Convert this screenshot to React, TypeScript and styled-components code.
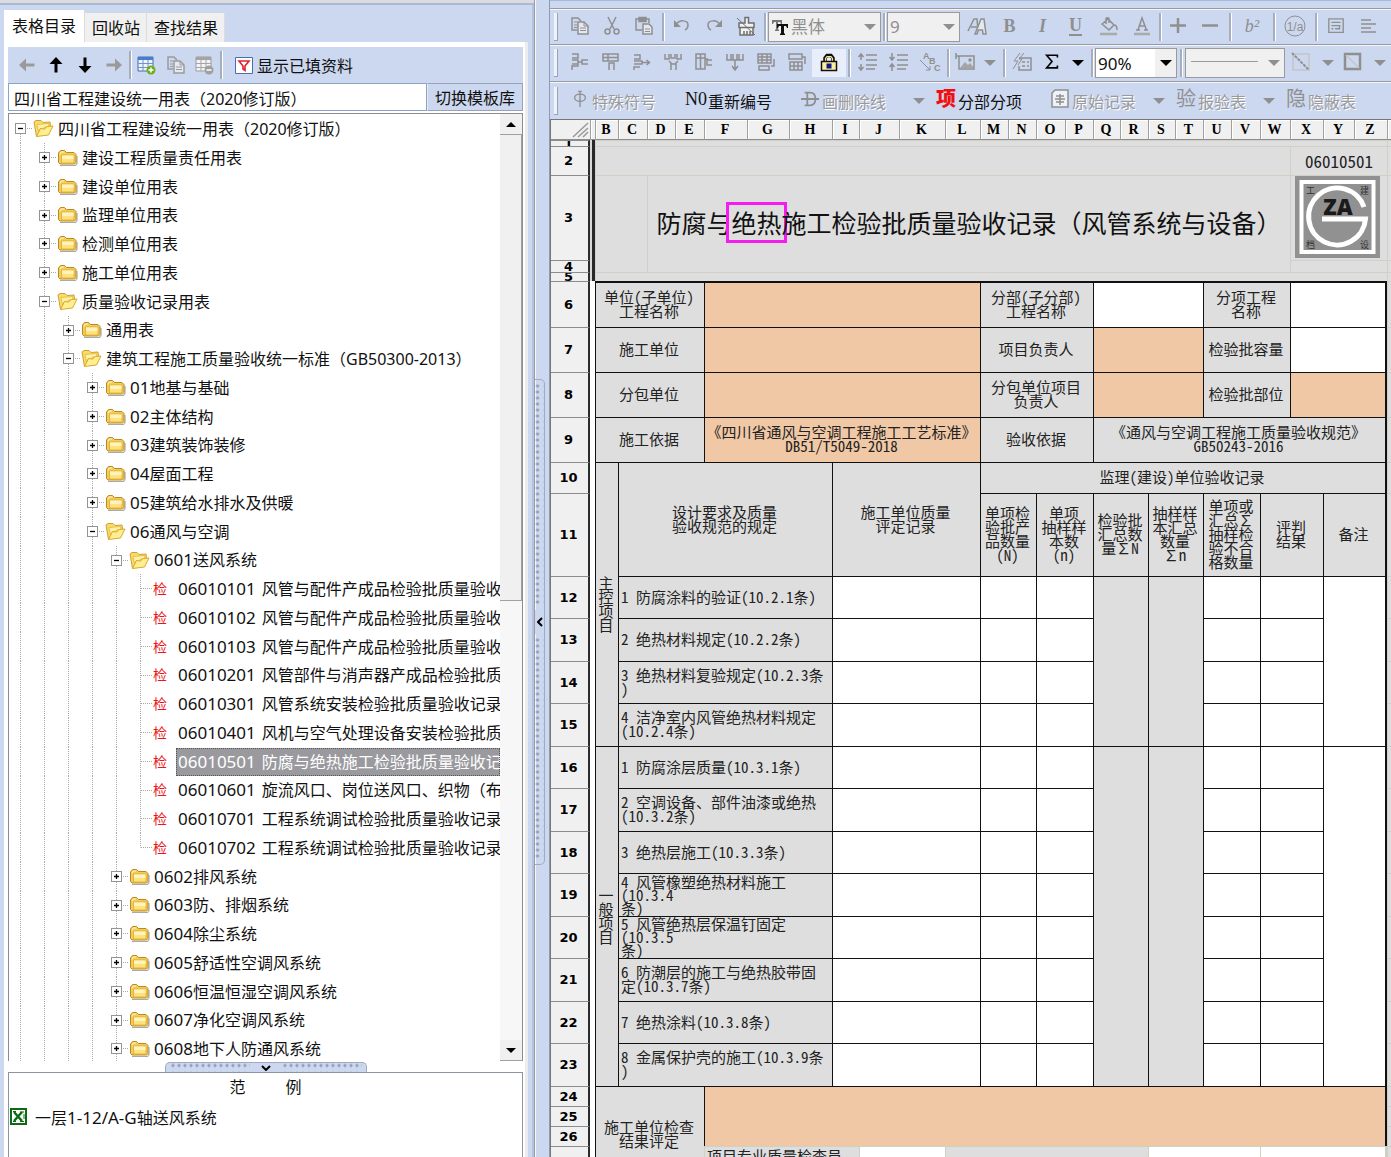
import React from "react";
import styled, { createGlobalStyle, css } from "styled-components";

const UI = `"Noto Sans", "Noto Sans CJK SC", sans-serif`;
const SHEET = `"Noto Sans Mono CJK SC", "Noto Sans CJK SC", monospace`;
const BLUE = "#ccd8f0";
const GREY = "#dedede";
const PEACH = "#f0c8a5";
const LINE = "#9a9a9a";

const Global = createGlobalStyle`
  * { box-sizing: border-box; }
  body { margin: 0; background: ${BLUE}; font-family: ${UI}; font-size: 16px; color: #111; }
  button, input, select { font: inherit; color: inherit; margin: 0; border-radius: 0; }
  button { padding: 0; border: 0; background: none; }
  svg { display: block; flex: none; }
`;

const Page = styled.div`
  display: grid;
  grid-template-columns: 534px 16px minmax(0, 1fr);
  height: 100vh;
  overflow: hidden;
  background: ${BLUE};
`;

/* ---------- left side ---------- */

const Side = styled.aside`
  display: flex;
  flex-direction: column;
  min-height: 0;
  padding: 7px 6px 0 4px;
  border-top: 3px solid #dcdcdc;
  box-shadow: inset 0 2px 0 #a9b9d8, inset -2px 0 0 #b4c2df;
`;

const Tabs = styled.div`
  display: flex;
  align-items: flex-end;
  height: 32px;
  flex: none;
`;

const Tab = styled.button<{ $active?: boolean }>`
  height: ${(p) => (p.$active ? 32 : 29)}px;
  padding: 0 ${(p) => (p.$active ? 8 : 6)}px;
  line-height: 28px;
  background: ${(p) => (p.$active ? "#fff" : "#f0f0f0")};
  border-right: 1px solid #dcdcdc;
  & + & { padding-left: 7px; }
`;

const SideBody = styled.div`
  display: flex;
  flex-direction: column;
  flex: 1;
  min-height: 0;
  padding: 5px 2px 0 4px;
  background: #fff;
  border-right: 3px solid #ececec;
`;

const SideTools = styled.div`
  display: flex;
  align-items: center;
  height: 36px;
  flex: none;
  padding-left: 4px;
  background: ${BLUE};
`;

const SideTool = styled.button`
  width: 29px;
  height: 30px;
  display: flex;
  align-items: center;
  justify-content: center;
  color: #9a9a9a;
`;

const FilterTool = styled.button`
  display: flex;
  align-items: center;
  gap: 4px;
  padding-left: 12px;
`;

const Divider = styled.i<{ $w?: number }>`
  flex: none;
  display: flex;
  justify-content: center;
  width: ${(p) => p.$w ?? 6}px;
  height: 28px;
  &::before {
    content: "";
    width: 2px;
    background: #a6aebd;
    border-right: 1px solid #fff;
  }
`;

const LibraryRow = styled.div`
  display: flex;
  height: 28px;
  flex: none;
  margin-bottom: 2px;
`;

const LibraryInput = styled.input`
  flex: 1;
  min-width: 0;
  padding: 2px 5px 0;
  border: 1px solid #8ba3c7;
  background: #fff;
  outline: 0;
`;

const LibraryButton = styled.button`
  width: 96px;
  background: ${BLUE};
  border: 1px solid #9aa3b5;
  border-left-color: #e4ebf8;
`;

const TreeFrame = styled.div`
  display: flex;
  flex: 1;
  min-height: 0;
  border: 1px solid #8d8d8d;
  border-width: 1px 1px 0 1px;
  background: #fff;
`;

const Tree = styled.ul`
  flex: 1;
  min-width: 0;
  margin: 0;
  padding: 0;
  list-style: none;
  overflow: hidden;
`;

const TreeRow = styled.li`
  display: flex;
  align-items: center;
  height: 29px;
  white-space: nowrap;
  &:nth-child(4n) { height: 28px; }
`;

const Guide = styled.span<{ $part: "all" | "top" | "bottom" }>`
  position: relative;
  flex: none;
  align-self: stretch;
  display: flex;
  align-items: center;
  justify-content: center;
  width: 24px;
  background: repeating-linear-gradient(#a8a8a8 0 1px, transparent 1px 2px) 11px
    ${(p) => (p.$part === "bottom" ? "14px" : "0")} / 1px
    ${(p) => (p.$part === "top" ? "50%" : "100%")} no-repeat;
`;

const Branch = styled.span`
  position: absolute;
  left: 12px;
  right: 0;
  top: 14px;
  height: 1px;
  background: repeating-linear-gradient(90deg, #a8a8a8 0 1px, transparent 1px 2px);
`;

const Toggle = styled.button`
  position: relative;
  width: 11px;
  height: 11px;
  margin-right: 1px;
  background: #fff;
  border: 1px solid #949494;
`;

const NodeIcon = styled.span<{ $leaf?: boolean }>`
  flex: none;
  display: flex;
  justify-content: ${(p) => (p.$leaf ? "flex-start" : "center")};
  width: 21px;
  margin-right: 2px;
`;

const CheckMark = styled.span`
  color: #f01414;
  font-size: 14px;
  line-height: 20px;
`;

const NodeLabel = styled.span<{ $selected?: boolean }>`
  display: flex;
  flex: 1;
  min-width: 0;
  overflow: hidden;
  padding-left: 2px;
  height: 28px;
  line-height: 28px;
  ${(p) =>
    p.$selected &&
    css`
      color: #fff;
      background: #9a9a9e;
      outline: 1px dotted #55555a;
      outline-offset: -1px;
    `}
`;

const Code = styled.span<{ $gap?: boolean }>`
  font-size: 17px;
  margin-right: ${(p) => (p.$gap ? 6 : 0)}px;
`;

const ScrollBar = styled.div`
  display: flex;
  flex-direction: column;
  width: 22px;
  background: #f7f7f7;
`;

const ScrollButton = styled.button`
  display: flex;
  align-items: center;
  justify-content: center;
  height: 21px;
  background: #f0f0f0;
  border-bottom: 1px solid #a0a0a0;
`;

const Thumb = styled.div`
  flex: 0 1 466px;
  background: #f0f0f0;
  border-right: 1px solid #a0a0a0;
  border-bottom: 1px solid #a0a0a0;
`;

const Gap = styled.div`
  flex: 1;
`;

const dots = css`
  background-image: radial-gradient(circle at 2px 2px, #8f9cb5 1px, transparent 2px);
  background-position: center;
`;

const PaneHandle = styled.div`
  align-self: center;
  display: flex;
  flex: none;
  width: 202px;
  height: 10px;
  margin: 1px 0 0 0;
  border: 1px solid #a3aabb;
  border-bottom: 0;
  border-radius: 5px 5px 0 0;
  background: ${BLUE};
`;

const HandleDotsX = styled.span`
  flex: 1;
  margin: 0 4px;
  ${dots}
  background-size: 6px 8px;
`;

const HandleButton = styled.button`
  display: flex;
  align-items: center;
  justify-content: center;
  flex: 0 0 24px;
  background: ${BLUE};
  border: 0 solid #a3aabb;
`;

const Samples = styled.section`
  flex: 0 0 85px;
  border: 1px solid #8c94a3;
  border-bottom: 0;
  background: #fff;
`;

const SamplesTitle = styled.h2`
  display: flex;
  justify-content: center;
  gap: 40px;
  margin: 0;
  font-size: 16px;
  font-weight: 400;
  line-height: 29px;
`;

const SampleItem = styled.button`
  display: flex;
  align-items: center;
  gap: 8px;
  height: 29px;
  padding-left: 1px;
`;

/* ---------- splitter ---------- */

const Splitter = styled.div`
  display: flex;
  flex-direction: column;
  justify-content: center;
  padding-top: 87px;
  border-left: 1px solid #9c9c9c;
  border-right: 1px solid #8f9bb0;
  box-shadow: inset 1px 0 0 #f4f6fb;
`;

const SplitHandle = styled.div`
  display: flex;
  flex-direction: column;
  width: 10px;
  height: 486px;
  border: 1px solid #a3aabb;
  border-left: 0;
  border-radius: 0 5px 5px 0;
`;

const HandleDotsY = styled.span`
  flex: 1;
  margin: 4px 0;
  ${dots}
  background-size: 8px 6px;
`;

/* ---------- right side ---------- */

const Main = styled.main`
  display: flex;
  flex-direction: column;
  min-width: 0;
  overflow: hidden;
  padding-top: 7px;
  border-top: 1px solid #a9b9d8;
`;

const Toolbar = styled.div<{ $h: number }>`
  display: flex;
  align-items: center;
  flex: none;
  height: ${(p) => p.$h}px;
  border-top: 1px solid ${LINE};
  box-shadow: inset 0 1px 0 #f3f6fc;
  overflow: hidden;
  white-space: nowrap;
`;

const Grip = styled.i`
  flex: none;
  width: 4px;
  height: 28px;
  margin: 0 6px 0 4px;
  background: #eef2fa;
  border-right: 1px solid #9aa3b5;
  border-bottom: 1px solid #9aa3b5;
`;

const Tool = styled.button<{ $w?: number; $on?: boolean; $live?: boolean }>`
  flex: none;
  display: flex;
  align-items: center;
  justify-content: center;
  width: ${(p) => p.$w ?? 32}px;
  height: 28px;
  padding-bottom: 2px;
  color: ${(p) => (p.$live ? "#000" : "#8f8f8f")};
  background: ${(p) => (p.$on ? "#e8eefa" : "none")};
`;

const Glyph = styled.span<{ $italic?: boolean; $under?: boolean; $plain?: boolean }>`
  font-family: "Liberation Serif", serif;
  font-size: 18px;
  font-weight: ${(p) => (p.$plain ? 400 : 700)};
  line-height: 18px;
  font-style: ${(p) => (p.$italic ? "italic" : "normal")};
  border-bottom: ${(p) => (p.$under ? "2px solid currentColor" : "0")};
`;

const PickBox = styled.span<{ $w: number }>`
  position: relative;
  flex: none;
  display: flex;
  width: ${(p) => p.$w}px;
  height: 30px;
`;

const Pick = styled.select<{ $left?: number; $live?: boolean }>`
  appearance: none;
  width: 100%;
  padding: 0 24px 0 ${(p) => p.$left ?? 2}px;
  border: 1px solid ${LINE};
  background: ${(p) => (p.$live ? "linear-gradient(90deg, #fff calc(100% - 21px), #f0f0f0 0)" : "#f0f0f0")};
  color: ${(p) => (p.$live ? "#111" : "#8f8f8f")};
  font-family: ${UI};
  font-size: 17px;
  opacity: 1;
  outline: 0;
`;

const PickArrow = styled.span`
  position: absolute;
  right: 5px;
  top: 12px;
  pointer-events: none;
`;

const PickArt = styled.span`
  position: absolute;
  left: 4px;
  top: 6px;
  pointer-events: none;
`;

const TextTool = styled.button<{ $ml?: number; $off?: boolean }>`
  flex: none;
  display: flex;
  align-items: center;
  gap: 2px;
  height: 28px;
  padding: 0 6px;
  margin-left: ${(p) => p.$ml ?? 0}px;
  color: ${(p) => (p.$off ? "#9a9a9a" : "#111")};
  text-shadow: ${(p) => (p.$off ? "1px 1px 0 #fff" : "none")};
`;

const TextToolIcon = styled.span<{ $color?: string; $bold?: boolean; $serif?: boolean }>`
  display: flex;
  justify-content: center;
  width: 20px;
  padding-bottom: 3px;
  color: ${(p) => p.$color ?? "#8f8f8f"};
  font-family: ${(p) => (p.$serif ? `"Liberation Serif", serif` : UI)};
  font-size: ${(p) => (p.$serif ? 18 : 20)}px;
  font-weight: ${(p) => (p.$bold ? 900 : 400)};
  line-height: 24px;
  text-shadow: none;
`;

const MenuArrow = styled.button<{ $ml?: number }>`
  flex: none;
  display: flex;
  justify-content: center;
  width: 22px;
  margin-left: ${(p) => p.$ml ?? 0}px;
`;

const SheetPane = styled.div`
  flex: 1;
  min-height: 0;
  overflow: hidden;
  background: ${GREY};
  border-left: 1px solid #777;
  border-top: 1px solid #777;
`;

const Sheet = styled.table`
  width: 100%;
  table-layout: fixed;
  border-collapse: separate;
  border-spacing: 0;
  font-family: ${SHEET};
  font-size: 15px;
  line-height: 14px;
  color: #222;
`;

const ColHead = styled.th`
  height: 20px;
  padding: 0 2px 0 0;
  background: #f0f0f0;
  border-left: 1px solid #a0a0a0;
  border-bottom: 1px solid #8c8c8c;
  box-shadow: inset 1px 1px 0 #fff;
  font: bold 14px/18px "Liberation Serif", serif;
  color: #000;
`;

const Corner = styled.th`
  padding: 0;
  background: #f0f0f0;
  border-bottom: 1px solid #8c8c8c;
  & > svg { margin-left: auto; }
`;

const RowHead = styled.th`
  padding: 0 2px 0 0;
  background: #f0f0f0;
  border-top: 1px solid #8c8c8c;
  border-right: 2px solid #2a2c2f;
  font: bold 13px/12px "DejaVu Sans", sans-serif;
  color: #000;
`;

const RowNumber = styled.div<{ $h: number }>`
  display: flex;
  align-items: center;
  justify-content: center;
  height: ${(p) => p.$h - 1}px;
  overflow: hidden;
`;

const Margin = styled.td<{ $dark?: boolean }>`
  padding: 0;
  background: ${(p) => (p.$dark ? "#d8d8d8" : "#fff")};
  border-right: ${(p) => (p.$dark ? "3px solid #26282b" : "0")};
`;

type Tone = "grey" | "peach" | "white";
const tones: Record<Tone, string> = { grey: GREY, peach: PEACH, white: "#fff" };

const Cell = styled.td<{
  $tone: Tone;
  $faint?: boolean;
  $left?: boolean;
  $end?: boolean;
  $thickTop?: boolean;
  $dense?: boolean;
  $top?: boolean;
}>`
  padding: ${(p) => (p.$top ? "2px 2px 0" : p.$left ? "0 0 2px 2px" : p.$faint ? "0" : "0 2px 2px 0")};
  vertical-align: ${(p) => (p.$top ? "top" : "middle")};
  text-align: ${(p) => (p.$left ? "left" : "center")};
  white-space: pre;
  overflow: hidden;
  background: ${(p) => tones[p.$tone]};
  border: 0 solid ${(p) => (p.$faint ? "#d2cfc6" : "#111")};
  border-top-width: ${(p) => (p.$thickTop ? 2 : 1)}px;
  border-left-width: 1px;
  border-right-width: ${(p) => (p.$end ? 2 : 0)}px;
  line-height: ${(p) => (p.$dense ? 13 : 14)}px;
`;

const Title = styled.div`
  padding-bottom: 4px;
  font-size: 25px;
  line-height: 32px;
  color: #111;
`;

const Highlight = styled.mark`
  display: inline-block;
  line-height: 31px;
  color: inherit;
  background: none;
  outline: 3px solid #f31df0;
  outline-offset: 2px;
`;

const FormCode = styled.div`
  font-size: 17px;
  line-height: 20px;
`;

const LogoBox = styled.div`
  padding-left: 2px;
`;

/* ---------- drawings ---------- */

const Tri = ({ up, color = "#8f8f8f", w = 12 }: { up?: boolean; color?: string; w?: number }) => (
  <svg width={w} height={w / 2} viewBox="0 0 12 6">
    <path d={up ? "M0 6 6 0l6 6z" : "M0 0h12L6 6z"} fill={color} />
  </svg>
);

const Art = ({ children, s = 20 }: { children: React.ReactNode; s?: number }) => (
  <svg width={s} height={s} viewBox="0 0 20 20" fill="none" stroke="currentColor" strokeWidth="1.5">
    {children}
  </svg>
);

const ClosedFolder = () => (
  <svg width="21" height="18" viewBox="0 0 21 18">
    <path d="M3 16.5h15.500l1.500-2V7" fill="none" stroke="#a9a9a9" strokeWidth="1.200" />
    <path d="M1.500 13.500V4l2-2.500h4L9.500 3.500h7.500l2 2v8l-1.500 1.500H3z" fill="#f3cb58" stroke="#b98a1c" />
    <path d="M4.500 6h12.500v8H4.500z" fill="#ffe27a" stroke="#d9aa3a" strokeWidth=".8" />
    <path d="M5 6.500h11.500v3.500H5z" fill="#fff4bd" />
    <path d="M3 5.500 4 3h3" fill="none" stroke="#fff4bd" />
  </svg>
);

const OpenFolder = () => (
  <svg width="21" height="19" viewBox="0 0 21 19">
    <path d="M3.500 17.500 1 3l2-1.500h5L10 3.500l7-.5.500 4" fill="#f8dc6a" stroke="#d0a02c" />
    <path d="M5.500 13 4 5.500l11.500-1 .5 3-4.500.5-1.500 1.500-3 .5z" fill="#fff2a6" stroke="#e2b840" strokeWidth=".8" />
    <path d="M3.500 17.500 7.500 9.500l4 .5 3-2.500 5.500-.5-4.500 9z" fill="#ffee92" stroke="#d9a92c" />
  </svg>
);

const Arrow = ({ r, color }: { r: number; color: string }) => (
  <svg width="16" height="16" viewBox="0 0 16 16">
    <path transform={`rotate(${r} 8 8)`} d="M0 8 7 1.500v5h8.500v3H7v5z" fill={color} />
  </svg>
);

const Grid = ({ off, minus }: { off?: boolean; minus?: boolean }) => (
  <svg width="19" height="19" viewBox="0 0 19 19">
    <path d="M1 1h15v14H1z" fill="#f2f4f8" stroke={off ? "#9b9b9b" : "#3f6db5"} />
    <path d="M1 1h15v3H1z" fill={off ? "#a5a5a5" : "#4a7cc8"} />
    <path d="M1 7.500h15M1 11.500h15M6 4v11M11 4v11" stroke={off ? "#a5a5a5" : "#6a94d2"} />
    <circle cx="14" cy="14" r="4.500" fill={off ? "#a0a0a0" : "#6cae1e"} />
    <path d={minus ? "M11.500 14h5" : "M11.500 14h5M14 11.500v5"} stroke="#fff" strokeWidth="1.500" />
  </svg>
);

const CopyArt = () => (
  <Art>
    <path d="M7 14H2V2h6l3 3" />
    <path d="M4 6h3M4 9h3M4 11.500h3" strokeWidth="1" />
    <path d="M8 6h6l4 4v8H8z" fill="#e4e8f0" />
    <path d="M14 6v4h4M10 12h6M10 14.500h6" strokeWidth="1" />
  </Art>
);

const Funnel = () => (
  <svg width="18" height="17" viewBox="0 0 18 17">
    <path d="M.500.500h17v16H.500z" fill="#fff" stroke="#4a6fb0" />
    <path d="M4 4h10l-4 5v4.500L8 12V9z" fill="none" stroke="#e0202c" strokeWidth="1.600" />
  </svg>
);

const ExcelArt = () => (
  <svg width="17" height="17" viewBox="0 0 17 17">
    <path d="M1 1h15v15H1z" fill="#fff" stroke="#0b6a12" strokeWidth="2" />
    <path d="m4 4 8 9M12 4l-8 9" stroke="#0b6a12" strokeWidth="2.400" />
    <path d="M10 4h4M10 13.500h4M3 13.500h3M3 3.500h3M14 6v5" stroke="#0b6a12" />
  </svg>
);

const LockArt = () => (
  <svg width="18" height="19" viewBox="0 0 18 19">
    <path d="M5 9V5l2-2.500h4L13 5v4" fill="none" stroke="#111" strokeWidth="3.500" />
    <path d="M5.500 9V5.500L7 3.500h4l1.500 2V9" fill="none" stroke="#f5e98c" strokeWidth="1.200" />
    <path d="M1.500 8.500h15v9h-15z" fill="#fbf0a0" stroke="#111" strokeWidth="1.500" />
    <path d="M6.500 10.500h5v5h-5z" fill="#14148c" />
  </svg>
);

const Logo = () => (
  <svg width="85" height="82" viewBox="0 0 85 82">
    <path d="M0 0h85v82H0z" fill="#919191" />
    <path d="M6.500 6h72v70h-72z" fill="none" stroke="#fff" strokeWidth="4" />
    <path d="M69 31A28.500 28.500 0 1 0 70.500 43H27" fill="none" stroke="#fff" strokeWidth="5" />
    <text x="43" y="39" textAnchor="middle" fontFamily="Open Sans, sans-serif" fontWeight="800" fontSize="22" fill="#1a1a1a">ZA</text>
    <g fontFamily="Noto Sans CJK SC, sans-serif" fontSize="9" fill="#333">
      <text x="11" y="18">工</text>
      <text x="65" y="18">建</text>
      <text x="11" y="72">档</text>
      <text x="65" y="72">设</text>
    </g>
  </svg>
);

/* ---------- tree data ---------- */

type Node = { d: number; kind: "open" | "closed" | "leaf"; code?: string; t: string; sel?: boolean; last?: boolean };
const nodes: Node[] = [
  { d: 0, kind: "open", t: "四川省工程建设统一用表（2020修订版）" },
  { d: 1, kind: "closed", t: "建设工程质量责任用表" },
  { d: 1, kind: "closed", t: "建设单位用表" },
  { d: 1, kind: "closed", t: "监理单位用表" },
  { d: 1, kind: "closed", t: "检测单位用表" },
  { d: 1, kind: "closed", t: "施工单位用表" },
  { d: 1, kind: "open", t: "质量验收记录用表" },
  { d: 2, kind: "closed", t: "通用表" },
  { d: 2, kind: "open", t: "建筑工程施工质量验收统一标准（GB50300-2013）" },
  { d: 3, kind: "closed", code: "01", t: "地基与基础" },
  { d: 3, kind: "closed", code: "02", t: "主体结构" },
  { d: 3, kind: "closed", code: "03", t: "建筑装饰装修" },
  { d: 3, kind: "closed", code: "04", t: "屋面工程" },
  { d: 3, kind: "closed", code: "05", t: "建筑给水排水及供暖" },
  { d: 3, kind: "open", code: "06", t: "通风与空调" },
  { d: 4, kind: "open", code: "0601", t: "送风系统" },
  { d: 5, kind: "leaf", code: "06010101", t: "风管与配件产成品检验批质量验收记录" },
  { d: 5, kind: "leaf", code: "06010102", t: "风管与配件产成品检验批质量验收记录" },
  { d: 5, kind: "leaf", code: "06010103", t: "风管与配件产成品检验批质量验收记录" },
  { d: 5, kind: "leaf", code: "06010201", t: "风管部件与消声器产成品检验批质量验收记录" },
  { d: 5, kind: "leaf", code: "06010301", t: "风管系统安装检验批质量验收记录" },
  { d: 5, kind: "leaf", code: "06010401", t: "风机与空气处理设备安装检验批质量验收记录" },
  { d: 5, kind: "leaf", code: "06010501", t: "防腐与绝热施工检验批质量验收记录", sel: true },
  { d: 5, kind: "leaf", code: "06010601", t: "旋流风口、岗位送风口、织物（布）风管安装" },
  { d: 5, kind: "leaf", code: "06010701", t: "工程系统调试检验批质量验收记录" },
  { d: 5, kind: "leaf", code: "06010702", t: "工程系统调试检验批质量验收记录", last: true },
  { d: 4, kind: "closed", code: "0602", t: "排风系统" },
  { d: 4, kind: "closed", code: "0603", t: "防、排烟系统" },
  { d: 4, kind: "closed", code: "0604", t: "除尘系统" },
  { d: 4, kind: "closed", code: "0605", t: "舒适性空调风系统" },
  { d: 4, kind: "closed", code: "0606", t: "恒温恒湿空调风系统" },
  { d: 4, kind: "closed", code: "0607", t: "净化空调风系统" },
  { d: 4, kind: "closed", code: "0608", t: "地下人防通风系统" },
];

const TreeNode = ({ n }: { n: Node }) => (
  <TreeRow role="treeitem" aria-level={n.d + 1} aria-selected={!!n.sel}>
    {Array.from({ length: n.d }, (_, i) => (
      <Guide key={i} $part="all" />
    ))}
    <Guide $part={n.d === 0 ? "bottom" : n.last ? "top" : "all"}>
      <Branch />
      {n.kind !== "leaf" && (
        <Toggle aria-label={n.kind === "open" ? "折叠" : "展开"}>
          <svg width="9" height="9" viewBox="0 0 9 9">
            <path d={n.kind === "open" ? "M2 4.500h5" : "M2 4.500h5M4.500 2v5"} stroke="#000" strokeWidth="1.300" />
          </svg>
        </Toggle>
      )}
    </Guide>
    <NodeIcon $leaf={n.kind === "leaf"}>
      {n.kind === "leaf" ? <CheckMark>检</CheckMark> : n.kind === "open" ? <OpenFolder /> : <ClosedFolder />}
    </NodeIcon>
    <NodeLabel $selected={n.sel}>
      {n.code && <Code $gap={n.kind === "leaf"}>{n.code}</Code>}
      {n.t}
    </NodeLabel>
  </TreeRow>
);

/* ---------- sheet data ---------- */

type C = {
  c?: number;
  r?: number;
  tone?: Tone;
  t?: React.ReactNode;
  left?: boolean;
  end?: boolean;
  faint?: boolean;
  thick?: boolean;
  dense?: boolean;
  top?: boolean;
};
type R = { n: string; h: number; cells: C[] };

const columns: [string, number][] = [
  ["B", 23], ["C", 29], ["D", 28], ["E", 29], ["F", 43], ["G", 42], ["H", 43], ["I", 27], ["J", 40],
  ["K", 46], ["L", 35], ["M", 28], ["N", 28], ["O", 29], ["P", 28], ["Q", 27], ["R", 28], ["S", 27],
  ["T", 28], ["U", 28], ["V", 29], ["W", 30], ["X", 33], ["Y", 31], ["Z", 33],
];

const item = (n: string, h: number, t: string, first?: { label: string; rows: number }, dense?: boolean): R => ({
  n,
  h,
  cells: [
    ...(first ? [{ r: first.rows, t: first.label } as C] : []),
    { c: 6, t, left: true, dense },
    { c: 4, tone: "white" },
    { c: 2, tone: "white" },
    { c: 2, tone: "white" },
    ...(n === "12" || n === "16" ? [{ c: 2, r: n === "12" ? 4 : 8 }, { c: 2, r: n === "12" ? 4 : 8 }] : []),
    { c: 2, tone: "white" },
    { c: 2, tone: "white" },
    ...(n === "12" || n === "16" ? [{ c: 2, r: n === "12" ? 4 : 8, tone: "white", end: true } as C] : []),
  ],
});

const rows: R[] = [
  { n: "1", h: 6, cells: [{ c: 25, faint: true }] },
  { n: "2", h: 29, cells: [{ c: 22, faint: true }, { c: 3, faint: true, t: <FormCode>06010501</FormCode> }] },
  {
    n: "3",
    h: 85,
    cells: [
      { c: 2, r: 2, faint: true },
      {
        c: 20,
        r: 2,
        faint: true,
        t: (
          <Title>
            防腐与<Highlight>绝热</Highlight>施工检验批质量验收记录（风管系统与设备）
          </Title>
        ),
      },
      { c: 3, faint: true, left: true, t: <LogoBox><Logo /></LogoBox> },
    ],
  },
  { n: "4", h: 12, cells: [{ c: 3, faint: true }] },
  { n: "5", h: 9, cells: [{ c: 25, faint: true }] },
  {
    n: "6",
    h: 46,
    cells: [
      { c: 4, thick: true, t: "单位(子单位)\n工程名称" },
      { c: 7, thick: true, tone: "peach" },
      { c: 4, thick: true, t: "分部(子分部)\n工程名称" },
      { c: 4, thick: true, tone: "white" },
      { c: 3, thick: true, t: "分项工程\n名称" },
      { c: 3, thick: true, tone: "white", end: true },
    ],
  },
  {
    n: "7",
    h: 45,
    cells: [
      { c: 4, t: "施工单位" },
      { c: 7, tone: "peach" },
      { c: 4, t: "项目负责人" },
      { c: 4, tone: "peach" },
      { c: 3, t: "检验批容量" },
      { c: 3, tone: "white", end: true },
    ],
  },
  {
    n: "8",
    h: 45,
    cells: [
      { c: 4, t: "分包单位" },
      { c: 7, tone: "peach" },
      { c: 4, t: "分包单位项目\n负责人" },
      { c: 4, tone: "peach" },
      { c: 3, t: "检验批部位" },
      { c: 3, tone: "peach", end: true },
    ],
  },
  {
    n: "9",
    h: 45,
    cells: [
      { c: 4, t: "施工依据" },
      { c: 7, tone: "peach", t: "《四川省通风与空调工程施工工艺标准》\nDB51/T5049-2018" },
      { c: 4, t: "验收依据" },
      { c: 10, end: true, t: "《通风与空调工程施工质量验收规范》\nGB50243-2016" },
    ],
  },
  {
    n: "10",
    h: 31,
    cells: [
      { r: 6, t: "主\n控\n项\n目" },
      { c: 6, r: 2, t: "设计要求及质量\n验收规范的规定" },
      { c: 4, r: 2, t: "施工单位质量\n评定记录" },
      { c: 14, end: true, t: "监理(建设)单位验收记录" },
    ],
  },
  {
    n: "11",
    h: 83,
    cells: [
      { c: 2, t: "单项检\n验批产\n品数量\n(N)" },
      { c: 2, t: "单项\n抽样样\n本数\n(n)" },
      { c: 2, t: "检验批\n汇总数\n量∑N" },
      { c: 2, t: "抽样样\n本汇总\n数量\n∑n" },
      { c: 2, t: "单项或\n汇总∑\n抽样检\n验不合\n格数量" },
      { c: 2, t: "评判\n结果" },
      { c: 2, end: true, t: "备注" },
    ],
  },
  item("12", 42, "1 防腐涂料的验证(10.2.1条)"),
  item("13", 43, "2 绝热材料规定(10.2.2条)"),
  item("14", 42, "3 绝热材料复验规定(10.2.3条\n)"),
  item("15", 43, "4 洁净室内风管绝热材料规定\n(10.2.4条)"),
  item("16", 42, "1 防腐涂层质量(10.3.1条)", { label: "一\n般\n项\n目", rows: 8 }),
  item("17", 43, "2 空调设备、部件油漆或绝热\n(10.3.2条)"),
  item("18", 42, "3 绝热层施工(10.3.3条)"),
  item("19", 43, "4 风管橡塑绝热材料施工\n(10.3.4\n条)", undefined, true),
  item("20", 42, "5 风管绝热层保温钉固定\n(10.3.5\n条)", undefined, true),
  item("21", 43, "6 防潮层的施工与绝热胶带固\n定(10.3.7条)"),
  item("22", 42, "7 绝热涂料(10.3.8条)"),
  item("23", 43, "8 金属保护壳的施工(10.3.9条\n)"),
  {
    n: "24",
    h: 20,
    cells: [
      { c: 4, r: 4, t: "施工单位检查\n结果评定" },
      { c: 21, r: 3, tone: "peach", end: true },
    ],
  },
  { n: "25", h: 20, cells: [] },
  { n: "26", h: 20, cells: [] },
  {
    n: "27",
    h: 36,
    cells: [
      { c: 4, faint: true, left: true, top: true, t: "项目专业质量检查员" },
      { c: 2, faint: true, tone: "white" },
      { c: 7, faint: true },
      { c: 4, faint: true, tone: "white" },
      { c: 4, faint: true, tone: "white", end: true },
    ],
  },
];

const SheetTable = () => (
  <Sheet>
    <colgroup>
      <col style={{ width: 39 }} />
      <col style={{ width: 5 }} />
      {columns.map(([k, w]) => (
        <col key={k} style={{ width: w }} />
      ))}
      <col />
    </colgroup>
    <thead>
      <tr>
        <Corner aria-label="全选">
          <svg width="18" height="17" viewBox="0 0 18 17" stroke="#999" fill="none">
            <path d="M1 16 16 2M6 16 16 7M11 16l5-5" strokeWidth="1.500" />
          </svg>
        </Corner>
        <ColHead aria-label="A" />
        {columns.map(([k]) => (
          <ColHead key={k} scope="col">{k}</ColHead>
        ))}
        <ColHead aria-label="AA" />
      </tr>
    </thead>
    <tbody>
      {rows.map((r, i) => (
        <tr key={r.n}>
          <RowHead scope="row">
            <RowNumber $h={r.h}>{r.n}</RowNumber>
          </RowHead>
          <Margin $dark={i < 5} />
          {r.cells.map((c, j) => (
            <Cell
              key={j}
              colSpan={c.c}
              rowSpan={c.r}
              $tone={c.tone ?? "grey"}
              $left={c.left}
              $end={c.end}
              $faint={c.faint}
              $thickTop={c.thick}
              $dense={c.dense}
              $top={c.top}
            >
              {c.t}
            </Cell>
          ))}
          <Cell $tone="grey" $faint />
        </tr>
      ))}
    </tbody>
  </Sheet>
);

/* ---------- toolbars ---------- */

const FormatBar = () => (
  <Toolbar $h={36}>
    <Grip />
    <Tool aria-label="复制"><CopyArt /></Tool>
    <Tool aria-label="剪切">
      <Art><path d="M6 1l6 12M14 1 8 13" /><circle cx="5.500" cy="15.500" r="2.500" /><circle cx="14.500" cy="15.500" r="2.500" /></Art>
    </Tool>
    <Tool aria-label="粘贴">
      <Art><path d="M8 14H2V3h13v4" /><path d="M5 1.500h7v4H5z" fill="#8f8f8f" /><path d="M9 8h6l3 3v7H9z" fill="#e4e8f0" /><path d="M11 13h5M11 15.500h5" strokeWidth="1" /></Art>
    </Tool>
    <Divider />
    <Tool aria-label="撤销">
      <Art><path d="M4 9c3-6 12-5 12 0 0 2-1 4-3 5" /><path d="M2 4v7h7z" fill="#8f8f8f" stroke="none" /></Art>
    </Tool>
    <Tool aria-label="重做">
      <Art><path d="M16 9C13 3 4 4 4 9c0 2 1 4 3 5" /><path d="M18 4v7h-7z" fill="#8f8f8f" stroke="none" /></Art>
    </Tool>
    <Tool aria-label="清除格式">
      <Art><path d="M9 1.500h3.500V7H18v4.500H3V7h6zM4 11.500V19h13v-7.500M8 15v4M11 15v4M14 15v4" fill="#f2f2f2" stroke="#6f6f6f" /><path d="m1 2 18 17" stroke="#6f6f6f" strokeWidth="1" /></Art>
    </Tool>
    <Divider />
    <PickBox $w={113}>
      <Pick $left={22} aria-label="字体" disabled><option>黑体</option></Pick>
      <PickArt>
        <svg width="16" height="18" viewBox="0 0 16 18" fill="#111">
          <path d="M0 2h10v4H9L8 4H6v7l1 1v1H3v-1l1-1V4H2L1 6H0z" fill="#777" />
          <path d="M5 6h11v4h-1l-1-2h-2v7l1 1v1H8v-1l1-1V8H7l-1 2H5z" />
        </svg>
      </PickArt>
      <PickArrow><Tri /></PickArrow>
    </PickBox>
    <Divider />
    <PickBox $w={73}>
      <Pick aria-label="字号" disabled><option>9</option></Pick>
      <PickArrow><Tri /></PickArrow>
    </PickBox>
    <Tool $w={33} aria-label="字体设置">
      <Art><path d="M1 15 7 3h3l1 12M4 11h6" /><path d="M8 18l6-15h3l2 15h-3l-.5-4h-4L10 18z" fill="#e4e8f0" /></Art>
    </Tool>
    <Tool $w={33}><Glyph>B</Glyph></Tool>
    <Tool $w={33}><Glyph $italic>I</Glyph></Tool>
    <Tool $w={33}><Glyph $under>U</Glyph></Tool>
    <Tool $w={33} aria-label="填充颜色">
      <Art><path d="m3 8 6-5 6 6-5 5zM7 8V2.500a2 2 0 0 1 3 0V7M15 9c3 0 3 3 3 5" /><path d="M1 18h17" strokeWidth="2.500" stroke="#aaa" /></Art>
    </Tool>
    <Tool $w={33} aria-label="字体颜色">
      <Art><path d="M4 14h4M12 14h4M6 14l4-12 4.500 12M7.500 10H13" /><path d="M2 18h16" strokeWidth="2.500" stroke="#aaa" /></Art>
    </Tool>
    <Divider $w={4} />
    <Tool aria-label="增大"><Art><path d="M10 2v15M2 9.500h16" strokeWidth="2.500" /></Art></Tool>
    <Tool aria-label="减小"><Art><path d="M2 9.500h16" strokeWidth="2.500" /></Art></Tool>
    <Divider $w={8} />
    <Tool $w={36}><Glyph $italic $plain>b²</Glyph></Tool>
    <Divider $w={8} />
    <Tool $w={34} aria-label="分数">
      <svg width="22" height="22" viewBox="0 0 22 22">
        <circle cx="11" cy="11" r="10" fill="none" stroke="#8f8f8f" />
        <text x="11" y="15.500" textAnchor="middle" fontFamily="Liberation Sans" fontSize="12" fill="#8f8f8f">1/a</text>
      </svg>
    </Tool>
    <Divider $w={8} />
    <Tool aria-label="自动换行"><Art s={18}><path d="M2 2h16v15H2z" /><path d="M5 6h10M5 9.500h9v3.500H9M5 13h2" /></Art></Tool>
    <Tool aria-label="左对齐"><Art><path d="M3 4h10M3 8h15M3 12h10M3 16h15" /></Art></Tool>
  </Toolbar>
);

const rowTools: [string, React.ReactNode][] = [
  ["插入行", <path d="M2 2h6v4H2M2 8h6v4H2M2 18v-4h6v-2M18 8h-6v4h6M8 10h4" />],
  ["插入表头", <path d="M2 2h15v7H2zM2 5.500h15M7 2v7M8 18v-7h5v7" />],
  ["追加行", <path d="M2 3h6v4H2M2 9h8v3H2M2 18v-3h6M10 10.500h7M14.500 8l3 2.500-3 2.500" />],
  ["插入列", <path d="M2 2v5h4V2M8 2v4h4V2M14 2v5h4V2M8 18v-6h5v6M6 9l3 3M15 9l-3 3" />],
  ["删除列", <path d="M2 2h9v15H2zM2 6h9M6.500 2v15M11 7h3M18 8h-5v5h5" />],
  ["追加列", <path d="M2 2v6h4V2M6 8h8M14 2v6h4V2M8 2v6h4V2M10 8v10M7 14l3 4 3-4" />],
  ["上移行", <path d="M2 2h13v9H2zM2 5h13M2 8h13M6 2v9M11 2v9M3 14h10v4H3zM15 14h3V7" />],
  ["下移行", <path d="M2 2h13v5H2zM3 10h12v8H3zM3 14h12M7 10v8M11 10v8M15 5h3v7" />],
];

const TableBar = () => (
  <Toolbar $h={37}>
    <Grip />
    {rowTools.map(([label, art]) => (
      <Tool key={label} $w={31} aria-label={label}><Art>{art}</Art></Tool>
    ))}
    <Tool $w={34} $on aria-label="锁定"><LockArt /></Tool>
    <Divider />
    <Tool $w={31} aria-label="增加行距"><Art><path d="M8 3h11M8 8h11M8 13h11M8 17h9M3 3v5M3 12v6M.500 5 3 2l2.500 3M.500 15 3 18l2.500-3" /></Art></Tool>
    <Tool $w={31} aria-label="减少行距"><Art><path d="M8 3h11M8 8h11M8 13h11M8 17h9M3 1v6M3 12v7M.500 5 3 8l2.500-3M.500 15 3 12l2.500 3" /></Art></Tool>
    <Tool $w={31} aria-label="文字方向">
      <svg width="22" height="22" viewBox="0 0 22 22" fill="#8f8f8f" fontFamily="Liberation Sans" fontSize="9" fontWeight="700">
        <text x="4" y="8">A</text><text x="10" y="13">B</text><text x="15" y="20">C</text>
        <path d="m1 9 10 10M11 15v4H7" fill="none" stroke="#8f8f8f" />
      </svg>
    </Tool>
    <Divider />
    <Tool $w={28} aria-label="图片"><Art><path d="M1 1v6M4 4h15v13H4zM1 4h3" /><path d="m5 16 5-6 3 3 2-2 4 5z" fill="#a5a5a5" stroke="none" /><circle cx="15" cy="8" r="1" /></Art></Tool>
    <MenuArrow aria-label="图片选项"><Tri /></MenuArrow>
    <Divider />
    <Tool $w={30} aria-label="表格公式"><Art><path d="M7 6h12v12H7v-4M10 10h3M15 10h2M10 14h3M15 14h2" /><path d="M8 1 2 9h4l-5 8M12 1 7 7h3l-4 6" strokeWidth="1" /></Art></Tool>
    <Tool $w={30} $live aria-label="求和"><Art s={18}><path d="M16 5V2.500H4L10 9.500 4 16.500h12V14" strokeWidth="1.800" /></Art></Tool>
    <MenuArrow aria-label="求和选项"><Tri color="#000" /></MenuArrow>
    <Divider />
    <PickBox $w={82}>
      <Pick $live aria-label="缩放"><option>90%</option></Pick>
      <PickArrow><Tri color="#000" /></PickArrow>
    </PickBox>
    <Divider $w={8} />
    <PickBox $w={100}>
      <Pick aria-label="线型" disabled><option /></Pick>
      <PickArt><svg width="70" height="18"><path d="M2 7.500h67" stroke="#999" /></svg></PickArt>
      <PickArrow><Tri /></PickArrow>
    </PickBox>
    <Tool aria-label="斜线"><Art><path d="M2 2h16v16H2z" stroke="#c4c4c4" /><path d="m1 1 17 17" strokeDasharray="3 1" strokeWidth="2" /></Art></Tool>
    <MenuArrow aria-label="斜线选项"><Tri /></MenuArrow>
    <Tool $w={28} aria-label="边框"><Art><path d="M2 2h15v15H2z" strokeWidth="2.500" /><path d="m3 3 13 13" stroke="#c4c4c4" /></Art></Tool>
    <MenuArrow $ml={2} aria-label="边框选项"><Tri /></MenuArrow>
  </Toolbar>
);

const FormBar = () => (
  <Toolbar $h={38}>
    <Grip />
    <TextTool $off>
      <TextToolIcon><Art s={18}><path d="M10 1v18M8 1.500h4" /><ellipse cx="10" cy="8.500" rx="6" ry="4" /></Art></TextToolIcon>特殊符号
    </TextTool>
    <TextTool $ml={18}><TextToolIcon $color="#111" $serif>N0</TextToolIcon>重新编号</TextTool>
    <TextTool $ml={16} $off>
      <TextToolIcon><Art s={18}><path d="M4 3h6q6 0 6 7t-6 7H4M7 3v14M0 10h20" strokeWidth="2" /></Art></TextToolIcon>画删除线
    </TextTool>
    <MenuArrow $ml={16} aria-label="删除线选项"><Tri /></MenuArrow>
    <TextTool><TextToolIcon $color="#f01010" $bold>项</TextToolIcon>分部分项</TextTool>
    <TextTool $ml={16} $off>
      <TextToolIcon><Art><path d="M5 1h13v17H2V4z" fill="#eef1f7" /><path d="M6 7h8M5 10h10M6 13h8M10 5v11" /></Art></TextToolIcon>原始记录
    </TextTool>
    <MenuArrow $ml={6} aria-label="原始记录选项"><Tri /></MenuArrow>
    <TextTool $off><TextToolIcon>验</TextToolIcon>报验表</TextTool>
    <MenuArrow $ml={6} aria-label="报验表选项"><Tri /></MenuArrow>
    <TextTool $off><TextToolIcon>隐</TextToolIcon>隐蔽表</TextTool>
  </Toolbar>
);

export default function App() {
  return (
    <>
      <Global />
      <Page>
        <Side>
          <Tabs role="tablist">
            <Tab role="tab" aria-selected $active>表格目录</Tab>
            <Tab role="tab">回收站</Tab>
            <Tab role="tab">查找结果</Tab>
          </Tabs>
          <SideBody>
            <SideTools>
              <SideTool aria-label="后退"><Arrow r={0} color="#9a9a9a" /></SideTool>
              <SideTool aria-label="上移"><Arrow r={90} color="#000" /></SideTool>
              <SideTool aria-label="下移"><Arrow r={270} color="#000" /></SideTool>
              <SideTool aria-label="前进"><Arrow r={180} color="#9a9a9a" /></SideTool>
              <Divider $w={4} />
              <SideTool aria-label="新建表格"><Grid /></SideTool>
              <SideTool aria-label="复制表格"><CopyArt /></SideTool>
              <SideTool aria-label="删除表格"><Grid off minus /></SideTool>
              <Divider $w={4} />
              <FilterTool><Funnel />显示已填资料</FilterTool>
            </SideTools>
            <LibraryRow>
              <LibraryInput aria-label="模板库" defaultValue="四川省工程建设统一用表（2020修订版）" />
              <LibraryButton>切换模板库</LibraryButton>
            </LibraryRow>
            <TreeFrame>
              <Tree role="tree">
                {nodes.map((n, i) => (
                  <TreeNode key={i} n={n} />
                ))}
              </Tree>
              <ScrollBar>
                <ScrollButton aria-label="向上滚动"><Tri up color="#000" w={10} /></ScrollButton>
                <Thumb />
                <Gap />
                <ScrollButton aria-label="向下滚动"><Tri color="#000" w={10} /></ScrollButton>
              </ScrollBar>
            </TreeFrame>
            <PaneHandle>
              <HandleDotsX />
              <HandleButton aria-label="收起范例">
                <svg width="10" height="6" viewBox="0 0 10 6"><path d="m1 1 4 4 4-4" fill="none" stroke="#000" strokeWidth="2" /></svg>
              </HandleButton>
              <HandleDotsX />
            </PaneHandle>
            <Samples>
              <SamplesTitle><span>范</span><span>例</span></SamplesTitle>
              <SampleItem><ExcelArt /><span>一层<Code>1-12/A-G</Code>轴送风系统</span></SampleItem>
            </Samples>
          </SideBody>
        </Side>
        <Splitter>
          <SplitHandle>
            <HandleDotsY />
            <HandleButton aria-label="收起目录">
              <svg width="6" height="10" viewBox="0 0 6 10"><path d="M5 1 1 5l4 4" fill="none" stroke="#000" strokeWidth="2" /></svg>
            </HandleButton>
            <HandleDotsY />
          </SplitHandle>
        </Splitter>
        <Main>
          <FormatBar />
          <TableBar />
          <FormBar />
          <SheetPane>
            <SheetTable />
          </SheetPane>
        </Main>
      </Page>
    </>
  );
}
